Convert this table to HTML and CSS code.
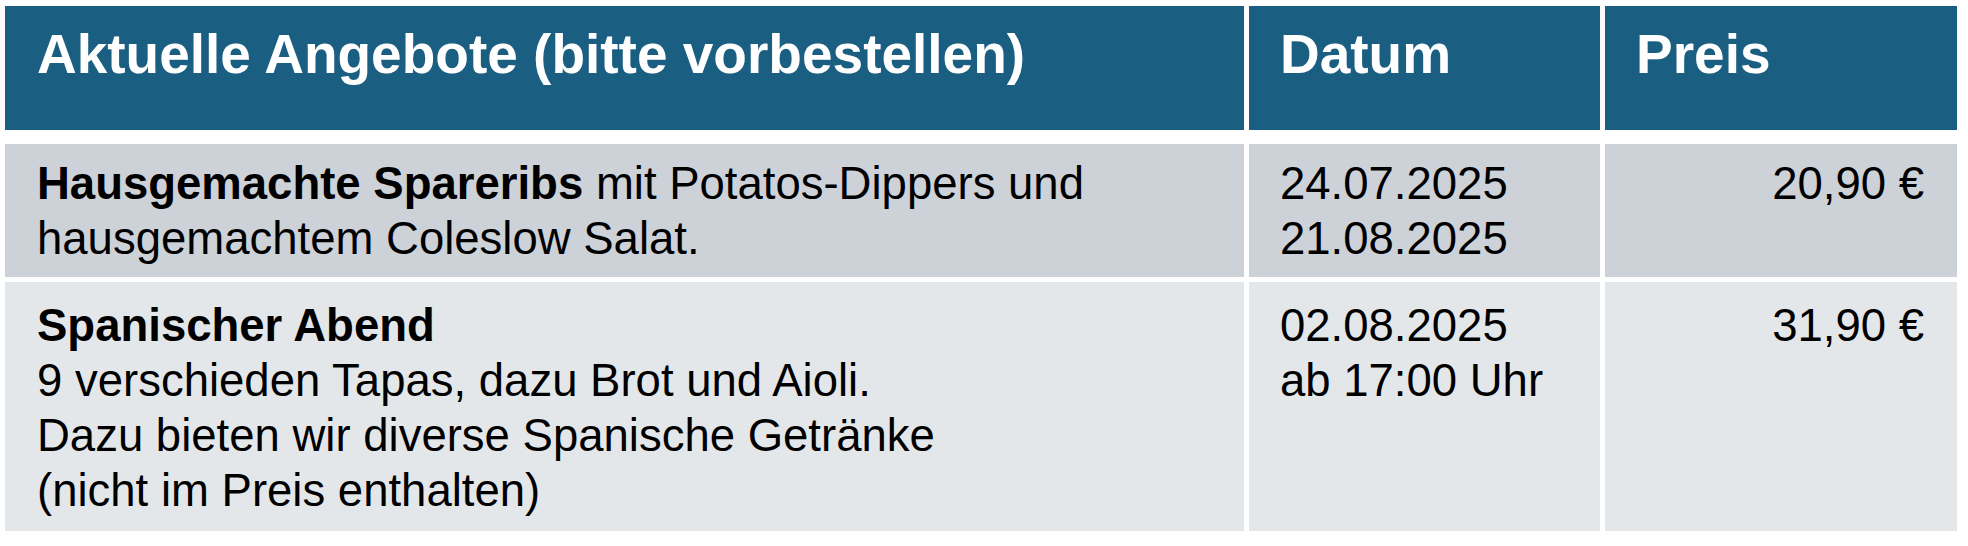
FILE: index.html
```html
<!DOCTYPE html>
<html lang="de">
<head>
<meta charset="utf-8">
<title>Aktuelle Angebote</title>
<link rel="stylesheet" href="styles.css">
</head>
<body>
<div class="table">
  <div class="row head">
    <div class="cell">Aktuelle Angebote (bitte vorbestellen)</div>
    <div class="cell">Datum</div>
    <div class="cell">Preis</div>
  </div>
  <div class="body">
    <div class="row r1">
      <div class="cell"><b>Hausgemachte Spareribs</b> mit Potatos-Dippers und<br>hausgemachtem Coleslow Salat.</div>
      <div class="cell">24.07.2025<br>21.08.2025</div>
      <div class="cell price">20,90 €</div>
    </div>
    <div class="row r2">
      <div class="cell"><b>Spanischer Abend</b><br>9 verschieden Tapas, dazu Brot und Aioli.<br>Dazu bieten wir diverse Spanische Getränke<br>(nicht im Preis enthalten)</div>
      <div class="cell">02.08.2025<br>ab 17:00 Uhr</div>
      <div class="cell price">31,90 €</div>
    </div>
  </div>
</div>
</body>
</html>
```

FILE: styles.css
```css
html, body {
  margin: 0;
  background: #ffffff;
}
body {
  padding: 6px 0 0 5px;
  font-family: "Liberation Sans", Arial, sans-serif;
  color: #000000;
}
.table {
  width: 1952px;
  display: flex;
  flex-direction: column;
  gap: 14px;
}
.body {
  display: flex;
  flex-direction: column;
  gap: 5px;
}
.row {
  display: grid;
  grid-template-columns: 1239px 351px 352px;
  column-gap: 5px;
}
.cell {
  padding-left: 32px;
  padding-right: 33px;
  white-space: nowrap;
}
.head .cell {
  background: #1a5e81;
  color: #ffffff;
  font-weight: bold;
  font-size: 55px;
  line-height: 66px;
  padding-top: 15px;
  padding-bottom: 43px;
}
.head .cell:not(:first-child) {
  padding-left: 31px;
}
.r1 .cell, .r2 .cell {
  font-size: 45.5px;
  line-height: 55px;
}
.r1 .cell {
  background: #cdd1d8;
  padding-top: 12px;
  padding-bottom: 11px;
}
.r2 .cell {
  background: #e4e7ea;
  padding-top: 16px;
  padding-bottom: 13px;
}
.r1 .cell:nth-child(2), .r2 .cell:nth-child(2) {
  padding-left: 31px;
}
.cell b {
  font-weight: bold;
}
.price {
  text-align: right;
}
```
